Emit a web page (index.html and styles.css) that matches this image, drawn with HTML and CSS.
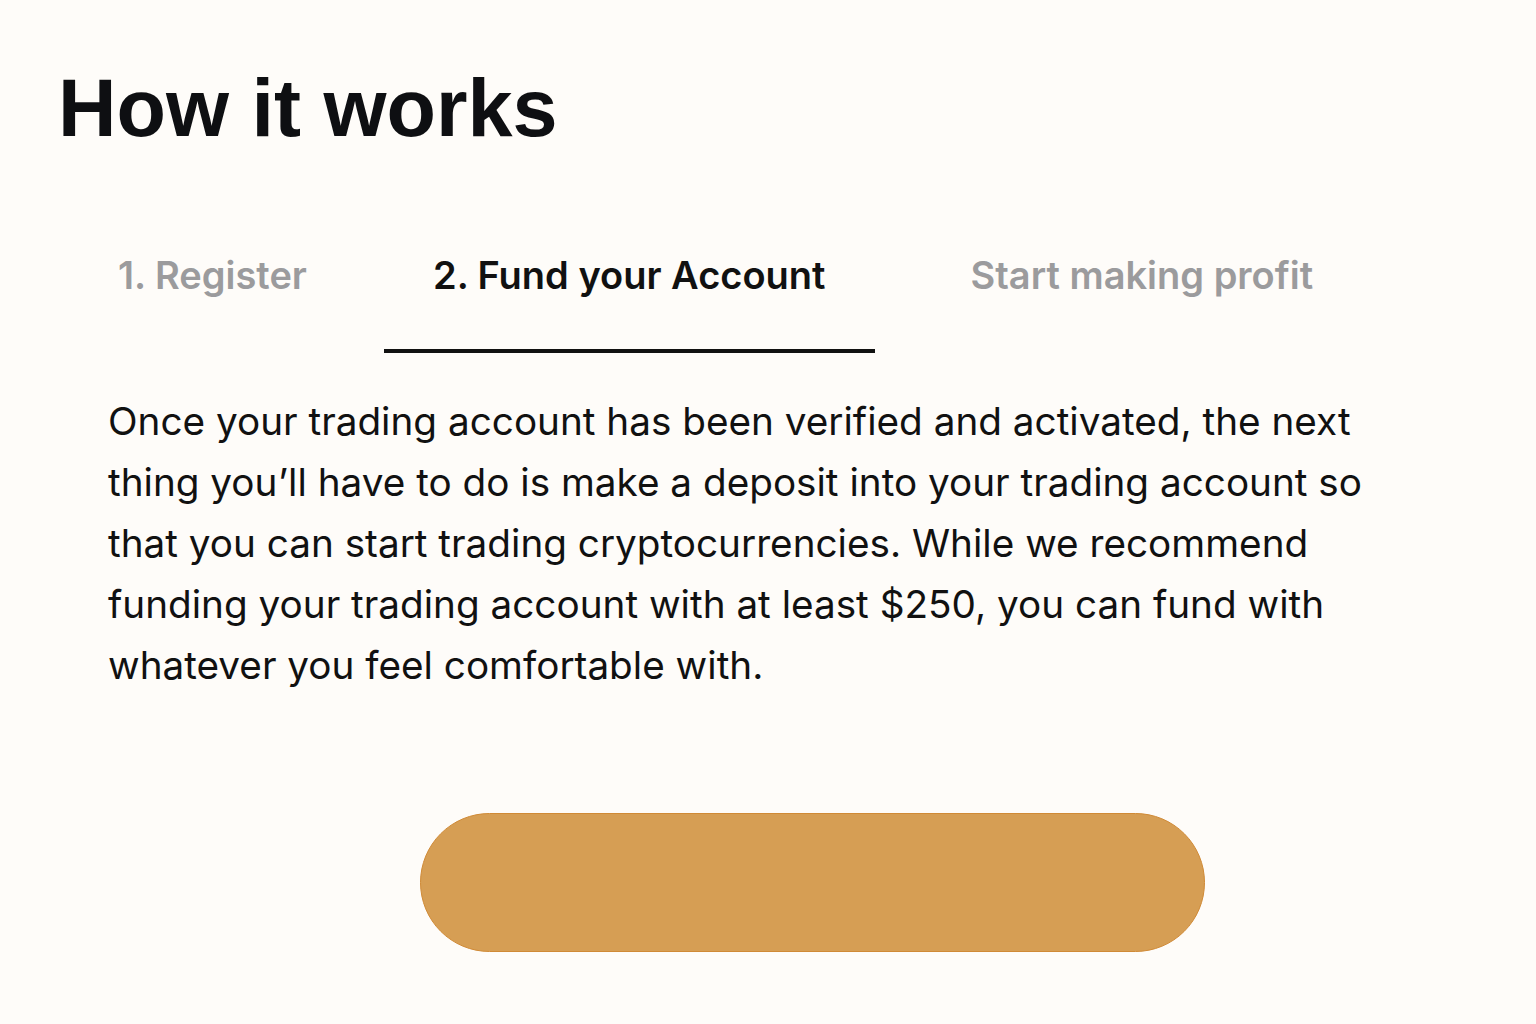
FILE: index.html
```html
<!DOCTYPE html>
<html lang="en">
<head>
    <meta charset="UTF-8">
    <meta name="viewport" content="width=device-width, initial-scale=1.0">
    <title>How it works</title>
    <link rel="stylesheet" href="styles.css">
</head>
<body>
    <section class="how">
        <h1>How it works</h1>
        <div class="tabs">
            <button class="tab tab-first">1. Register</button>
            <button class="tab active">2. Fund your Account</button>
            <button class="tab tab-last">Start making profit</button>
        </div>
        <p class="text">Once your trading account has been verified and activated, the next thing you’ll have to do is make a deposit into your trading account so that you can start trading cryptocurrencies. While we recommend funding your trading account with at least $250, you can fund with whatever you feel comfortable with.</p>
        <div class="actions">
            <button class="cta" aria-label="Continue"></button>
        </div>
    </section>
</body>
</html>
```

FILE: styles.css
```css
body {
    margin: 0;
    background: #fefcf9;
    font-family: Inter, "Liberation Sans", sans-serif;
    color: #111;
}
.how {
    padding: 58px 0 0 58px;
    width: 1400px;
}
.how h1 {
    margin: 0;
    font-family: "Liberation Sans", Arial, sans-serif;
    font-weight: 700;
    font-size: 81px;
    line-height: 100px;
    color: #0e0f12;
}
.tabs {
    display: flex;
    margin-top: 95px;
    padding-left: 11px;
}
.tab {
    background: none;
    border: none;
    border-bottom: 4px solid transparent;
    padding: 0 49px 52px;
    font-family: Inter, "Liberation Sans", sans-serif;
    font-size: 38px;
    font-weight: 600;
    line-height: 44px;
    color: #9b9b9d;
    cursor: pointer;
}
.tab.active {
    color: #111;
    border-bottom-color: #111;
    margin-left: 28px;
    margin-right: 47px;
}
.text {
    margin: 38px 0 0 50px;
    width: 1270px;
    font-size: 38.7px;
    line-height: 61px;
    color: #111;
}
.actions {
    display: flex;
    padding-left: 362px;
    margin-top: 117px;
}
.cta {
    width: 785px;
    height: 139px;
    border-radius: 70px;
    background: #d69e54;
    border: 1px solid #d08a36;
    cursor: pointer;
}
```
